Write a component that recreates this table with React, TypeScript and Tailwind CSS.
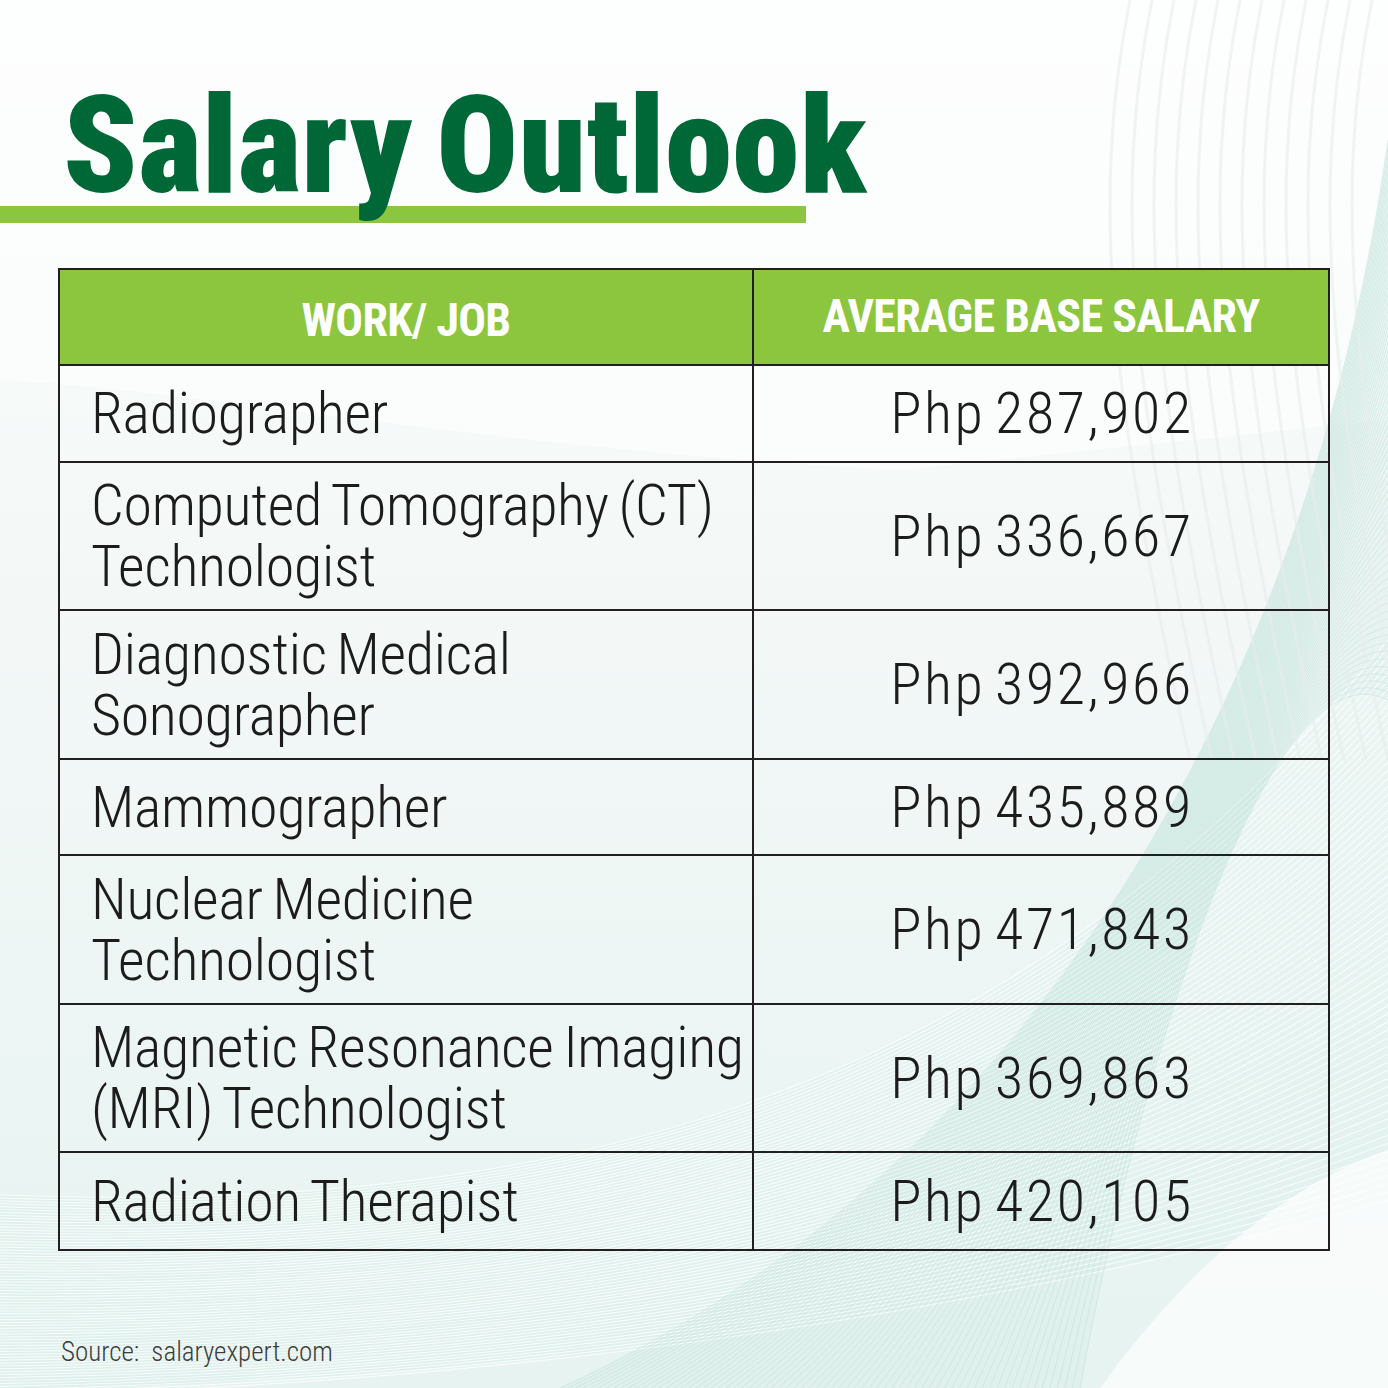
import React from "react";

type Row = { job: string[]; salary: string; h: string };

const rows: Row[] = [
  { job: ["Radiographer"], salary: "Php 287,902", h: "h-[97px]" },
  { job: ["Computed Tomography (CT)", "Technologist"], salary: "Php 336,667", h: "h-[148px]" },
  { job: ["Diagnostic Medical", "Sonographer"], salary: "Php 392,966", h: "h-[149px]" },
  { job: ["Mammographer"], salary: "Php 435,889", h: "h-[96px]" },
  { job: ["Nuclear Medicine", "Technologist"], salary: "Php 471,843", h: "h-[149px]" },
  { job: ["Magnetic Resonance Imaging", "(MRI) Technologist"], salary: "Php 369,863", h: "h-[148px]" },
  { job: ["Radiation Therapist"], salary: "Php 420,105", h: "h-[98px]" },
];

function Background() {
  const bandA = Array.from({ length: 70 }, (_, i) => {
    const t = i / 69;
    const y0 = 1195 + t * 200;
    const c1 = 1215 + t * 170;
    const c2 = 1120 + t * 190;
    const y3 = 640 + t * 560;
    return `M0,${y0} C520,${c1} 1000,${c2} 1388,${y3}`;
  });
  const bandB = Array.from({ length: 70 }, (_, i) => {
    const t = i / 69;
    const x0 = 560 + t * 520;
    const cy = 1180 - t * 120;
    const y3 = 140 + t * 560;
    return `M${x0},1388 C${1020 + t * 120},${cy} ${1310 - t * 40},${700 - t * 60} 1388,${y3}`;
  });
  const arcs = Array.from({ length: 12 }, (_, i) => {
    const x = 1130 + i * 22;
    return `M${x},0 C${x - 40},200 ${x - 20},400 ${x + 60},760`;
  });
  return (
    <svg
      className="absolute inset-0"
      width="1388"
      height="1388"
      viewBox="0 0 1388 1388"
      aria-hidden="true"
    >
      <defs>
        <linearGradient id="bg" x1="0" y1="0" x2="0" y2="1">
          <stop offset="0" stopColor="#fbfcfc" />
          <stop offset="0.45" stopColor="#f3f8f7" />
          <stop offset="1" stopColor="#e6f3f0" />
        </linearGradient>
        <linearGradient id="mint" x1="0" y1="1" x2="1" y2="0">
          <stop offset="0" stopColor="#d3ece6" stopOpacity="0.9" />
          <stop offset="1" stopColor="#d6eee8" stopOpacity="0.5" />
        </linearGradient>
      </defs>
      <rect width="1388" height="1388" fill="url(#bg)" />
      <path
        d="M0,380 C200,390 500,450 900,470 L1388,420 L1388,0 L0,0 Z"
        fill="#ffffff"
        opacity="0.55"
      />
      <path
        d="M0,1195 C520,1215 1000,1120 1388,640 L1388,1200 C1000,1310 520,1385 0,1388 Z"
        fill="url(#mint)"
        opacity="0.5"
      />
      <path
        d="M560,1388 C1020,1180 1310,700 1388,140 L1388,700 C1270,640 1140,1060 1080,1388 Z"
        fill="#d4ece6"
        opacity="0.35"
      />
      <path d="M1100,1388 C1200,1250 1300,1180 1388,1150 L1388,1388 Z" fill="#fbfdfc" opacity="0.8" />
      <g fill="none" stroke="#ffffff" strokeWidth="1.2" opacity="0.75">
        {bandA.map((d, i) => (
          <path key={i} d={d} />
        ))}
      </g>
      <g fill="none" stroke="#b9e0d7" strokeWidth="1" opacity="0.45">
        {bandB.map((d, i) => (
          <path key={i} d={d} />
        ))}
      </g>
      <g fill="none" stroke="#e8eeed" strokeWidth="3" opacity="0.6">
        {arcs.map((d, i) => (
          <path key={i} d={d} />
        ))}
      </g>
    </svg>
  );
}

export default function App() {
  return (
    <div className="relative w-[1388px] h-[1388px] overflow-hidden font-['Roboto_Condensed','Liberation_Sans',sans-serif]">
      <Background />
      <div className="relative flex flex-col">
        <h1 className="relative z-10 pt-[78px] pl-[63px] text-[136px] leading-none font-black tracking-[0.002em] [word-spacing:-0.06em] text-[#006837] whitespace-nowrap">
          Salary Outlook
        </h1>
        <div className="-mt-[8px] h-[17px] w-[806px] bg-[#8cc63f]" />

        <div className="mt-[45px] ml-[58px] w-[1272px] flex flex-col border-2 border-[#231f20]">
          <div className="flex h-[94px] bg-[#8cc63f] text-white font-bold text-[46px] tracking-[-0.015em] leading-none">
            <div className="w-[694px] border-r-2 border-[#231f20] flex items-center justify-center pt-[6px]">
              WORK/ JOB
            </div>
            <div className="flex-1 flex items-center justify-center pb-[2px]">
              AVERAGE BASE SALARY
            </div>
          </div>
          {rows.map((r) => (
            <div
              key={r.salary}
              className={`flex border-t-2 border-[#231f20] text-[#1c1c1c] font-light text-[58px] leading-[61px] ${r.h}`}
            >
              <div className="w-[694px] border-r-2 border-[#231f20] flex flex-col justify-center pl-[31px] tracking-[-0.005em] [word-spacing:-3px]">
                {r.job.map((l) => (
                  <span key={l} className="whitespace-nowrap">
                    {l}
                  </span>
                ))}
              </div>
              <div className="flex-1 flex items-center justify-center pl-[2px] tracking-[0.045em] [word-spacing:-6px]">
                <span className="whitespace-nowrap">{r.salary}</span>
              </div>
            </div>
          ))}
        </div>

        <div className="mt-[86px] ml-[61px] text-[27px] leading-[30px] font-light text-[#3d3d3d] whitespace-pre">
          Source:  salaryexpert.com
        </div>
      </div>
    </div>
  );
}
